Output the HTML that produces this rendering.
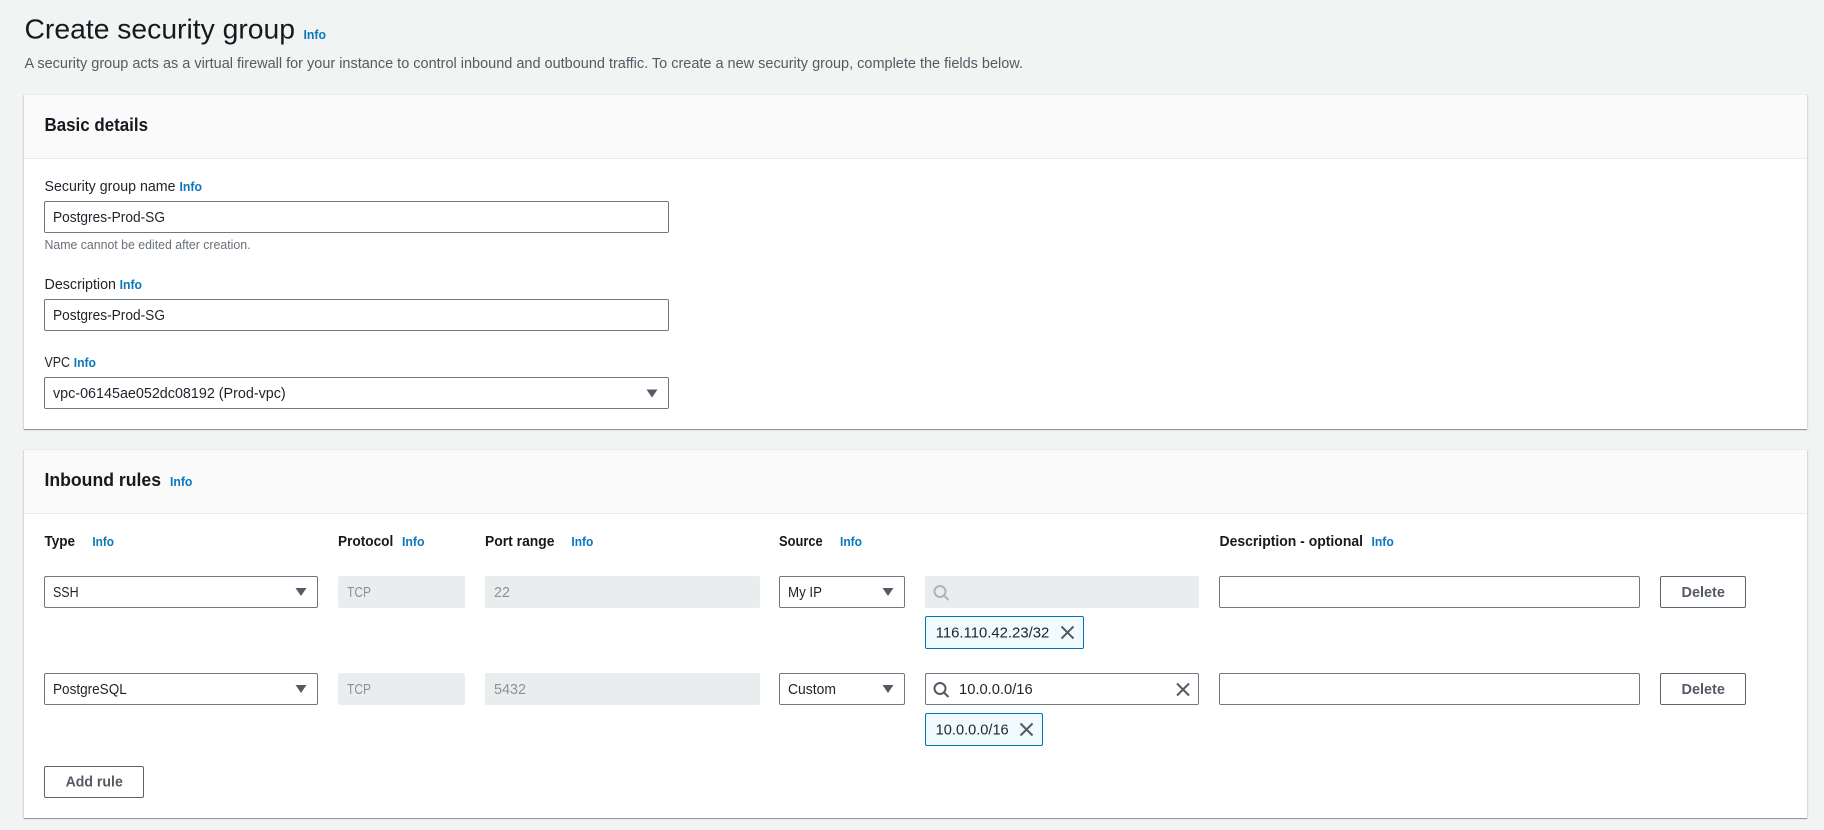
<!DOCTYPE html>
<html lang="en">
<head>
<meta charset="utf-8">
<title>Create security group</title>
<style>
html,body{margin:0;padding:0;width:1824px;height:830px;overflow:hidden;background:#f2f3f3}
body{position:relative;font-family:"Liberation Sans",sans-serif}
.panel{position:absolute;left:24px;width:1783px;background:#fff;box-shadow:0 1px 0 #8f9a9f,1px 0 0 #d5dbdb,-1px 0 0 #d5dbdb,0 -1px 0 #eaeded,1px 1px 1px rgba(0,28,36,.12),-1px 1px 1px rgba(0,28,36,.12)}
.head{position:absolute;left:0;top:0;width:100%;height:63px;background:#fafafa;border-bottom:1px solid #eaeded}
.box{position:absolute;box-sizing:border-box;height:32px;background:#fff;border:1px solid #6f777f;border-radius:2px}
.dis{position:absolute;box-sizing:border-box;height:32px;background:#eaeded;border-radius:2px}
.btn{position:absolute;box-sizing:border-box;height:32px;background:#fff;border:1px solid #5c636c;border-radius:2px}
.tag{position:absolute;box-sizing:border-box;height:33px;background:#f1faff;border:1px solid #0073bb;border-radius:2px}
svg.ov{position:absolute;left:0;top:0;width:1824px;height:830px}
text{font-family:"Liberation Sans",sans-serif;font-size:14.5px;fill:#1f232a}
.h1{font-size:28px;fill:#16191f}
.sub{fill:#545b64;font-size:14.5px}
.h2{font-size:18.5px;font-weight:700;fill:#16191f}
.lb{font-size:14.5px}
.th{font-size:14.5px;font-weight:700;fill:#16191f}
.i{font-size:12.500px;font-weight:700;fill:#0a78bd}
.hint{font-size:12.500px;fill:#687078}
.off{fill:#879596}
.b{font-weight:700;fill:#545b64;font-size:14.5px}
</style>
</head>
<body>
<div class="panel" style="top:95px;height:334px"><div class="head"></div></div>
<div class="panel" style="top:450px;height:368px"><div class="head"></div></div>

<div class="box" style="left:44px;top:201px;width:625px"></div>
<div class="box" style="left:44px;top:299px;width:625px"></div>
<div class="box" style="left:44px;top:377px;width:625px"></div>

<div class="box" style="left:44px;top:576px;width:274px"></div>
<div class="dis" style="left:338px;top:576px;width:127px"></div>
<div class="dis" style="left:485px;top:576px;width:275px"></div>
<div class="box" style="left:779px;top:576px;width:126px"></div>
<div class="dis" style="left:925px;top:576px;width:274px"></div>
<div class="box" style="left:1219px;top:576px;width:421px"></div>
<div class="btn" style="left:1660px;top:576px;width:86px"></div>
<div class="tag" style="left:925px;top:616px;width:159px"></div>

<div class="box" style="left:44px;top:673px;width:274px"></div>
<div class="dis" style="left:338px;top:673px;width:127px"></div>
<div class="dis" style="left:485px;top:673px;width:275px"></div>
<div class="box" style="left:779px;top:673px;width:126px"></div>
<div class="box" style="left:925px;top:673px;width:274px"></div>
<div class="box" style="left:1219px;top:673px;width:421px"></div>
<div class="btn" style="left:1660px;top:673px;width:86px"></div>
<div class="tag" style="left:925px;top:713px;width:118px"></div>

<div class="btn" style="left:44px;top:766px;width:100px"></div>

<svg class="ov" viewBox="0 0 1824 830" xmlns="http://www.w3.org/2000/svg">
<text class="h1" x="24.5" y="38.5" textLength="270.5" lengthAdjust="spacingAndGlyphs">Create security group</text>
<text class="i" x="303.5" y="39" textLength="22.5" lengthAdjust="spacingAndGlyphs">Info</text>
<text class="sub" x="24.5" y="68" textLength="998.5" lengthAdjust="spacingAndGlyphs">A security group acts as a virtual firewall for your instance to control inbound and outbound traffic. To create a new security group, complete the fields below.</text>

<text class="h2" x="44.5" y="131" textLength="103.5" lengthAdjust="spacingAndGlyphs">Basic details</text>

<text class="lb" x="44.5" y="191" textLength="131" lengthAdjust="spacingAndGlyphs">Security group name</text>
<text class="i" x="179.5" y="191" textLength="22.5" lengthAdjust="spacingAndGlyphs">Info</text>
<text class="lb" x="53" y="222" textLength="112" lengthAdjust="spacingAndGlyphs">Postgres-Prod-SG</text>
<text class="hint" x="44.5" y="249" textLength="206" lengthAdjust="spacingAndGlyphs">Name cannot be edited after creation.</text>

<text class="lb" x="44.5" y="289" textLength="71.5" lengthAdjust="spacingAndGlyphs">Description</text>
<text class="i" x="119.6" y="289" textLength="22.4" lengthAdjust="spacingAndGlyphs">Info</text>
<text class="lb" x="53" y="320" textLength="112" lengthAdjust="spacingAndGlyphs">Postgres-Prod-SG</text>

<text class="lb" x="44.5" y="367" textLength="25.5" lengthAdjust="spacingAndGlyphs">VPC</text>
<text class="i" x="73.7" y="367" textLength="22.3" lengthAdjust="spacingAndGlyphs">Info</text>
<text class="lb" x="53" y="398" textLength="232.7" lengthAdjust="spacingAndGlyphs">vpc-06145ae052dc08192 (Prod-vpc)</text>
<path d="M646.500 389.500h11l-5.500 8z" fill="#545b64"/>

<text class="h2" x="44.5" y="486" textLength="116.5" lengthAdjust="spacingAndGlyphs">Inbound rules</text>
<text class="i" x="170" y="486" textLength="22.4" lengthAdjust="spacingAndGlyphs">Info</text>

<text class="th" x="44.5" y="546" textLength="30.5" lengthAdjust="spacingAndGlyphs">Type</text>
<text class="i" x="92.4" y="546" textLength="21.6" lengthAdjust="spacingAndGlyphs">Info</text>
<text class="th" x="338" y="546" textLength="55.3" lengthAdjust="spacingAndGlyphs">Protocol</text>
<text class="i" x="402" y="546" textLength="22.5" lengthAdjust="spacingAndGlyphs">Info</text>
<text class="th" x="485" y="546" textLength="69.5" lengthAdjust="spacingAndGlyphs">Port range</text>
<text class="i" x="571.4" y="546" textLength="21.9" lengthAdjust="spacingAndGlyphs">Info</text>
<text class="th" x="779" y="546" textLength="43.7" lengthAdjust="spacingAndGlyphs">Source</text>
<text class="i" x="840" y="546" textLength="22" lengthAdjust="spacingAndGlyphs">Info</text>
<text class="th" x="1219.5" y="546" textLength="143.5" lengthAdjust="spacingAndGlyphs">Description - optional</text>
<text class="i" x="1371.500" y="546" textLength="22.3" lengthAdjust="spacingAndGlyphs">Info</text>

<text class="lb" x="53" y="597" textLength="25.6" lengthAdjust="spacingAndGlyphs">SSH</text>
<path d="M295.500 588h11l-5.500 8z" fill="#545b64"/>
<text class="lb off" x="347" y="597" textLength="24" lengthAdjust="spacingAndGlyphs">TCP</text>
<text class="lb off" x="494" y="597" textLength="16" lengthAdjust="spacingAndGlyphs">22</text>
<text class="lb" x="788" y="597" textLength="34" lengthAdjust="spacingAndGlyphs">My IP</text>
<path d="M882.500 588h11l-5.500 8z" fill="#545b64"/>
<g fill="none" stroke="#aab7b8" stroke-width="2"><circle cx="940" cy="591.500" r="5.500"/><path d="M944 595.500l4.500 4.500"/></g>
<text class="b" x="1681.500" y="597" textLength="43.4" lengthAdjust="spacingAndGlyphs">Delete</text>

<text class="lb" x="935.700" y="637.300" textLength="113.6" lengthAdjust="spacingAndGlyphs">116.110.42.23/32</text>
<path d="M1061.500 626.500l12 12M1073.500 626.500l-12 12" stroke="#545b64" stroke-width="2" fill="none"/>

<text class="lb" x="53" y="694" textLength="73.8" lengthAdjust="spacingAndGlyphs">PostgreSQL</text>
<path d="M295.500 685h11l-5.500 8z" fill="#545b64"/>
<text class="lb off" x="347" y="694" textLength="24" lengthAdjust="spacingAndGlyphs">TCP</text>
<text class="lb off" x="494" y="694" textLength="32" lengthAdjust="spacingAndGlyphs">5432</text>
<text class="lb" x="788" y="694" textLength="48" lengthAdjust="spacingAndGlyphs">Custom</text>
<path d="M882.500 685h11l-5.500 8z" fill="#545b64"/>
<g fill="none" stroke="#545b64" stroke-width="2"><circle cx="940" cy="688.500" r="5.500"/><path d="M944 692.500l4.500 4.500"/></g>
<text class="lb" x="959" y="694" textLength="73.7" lengthAdjust="spacingAndGlyphs">10.0.0.0/16</text>
<path d="M1177 683.500l12 12M1189 683.500l-12 12" stroke="#545b64" stroke-width="2" fill="none"/>
<text class="b" x="1681.500" y="694" textLength="43.4" lengthAdjust="spacingAndGlyphs">Delete</text>

<text class="lb" x="935.700" y="734.300" textLength="73" lengthAdjust="spacingAndGlyphs">10.0.0.0/16</text>
<path d="M1020.500 723.500l12 12M1032.500 723.500l-12 12" stroke="#545b64" stroke-width="2" fill="none"/>

<text class="b" x="65.600" y="786.700" textLength="57.2" lengthAdjust="spacingAndGlyphs">Add rule</text>
</svg>
</body>
</html>
